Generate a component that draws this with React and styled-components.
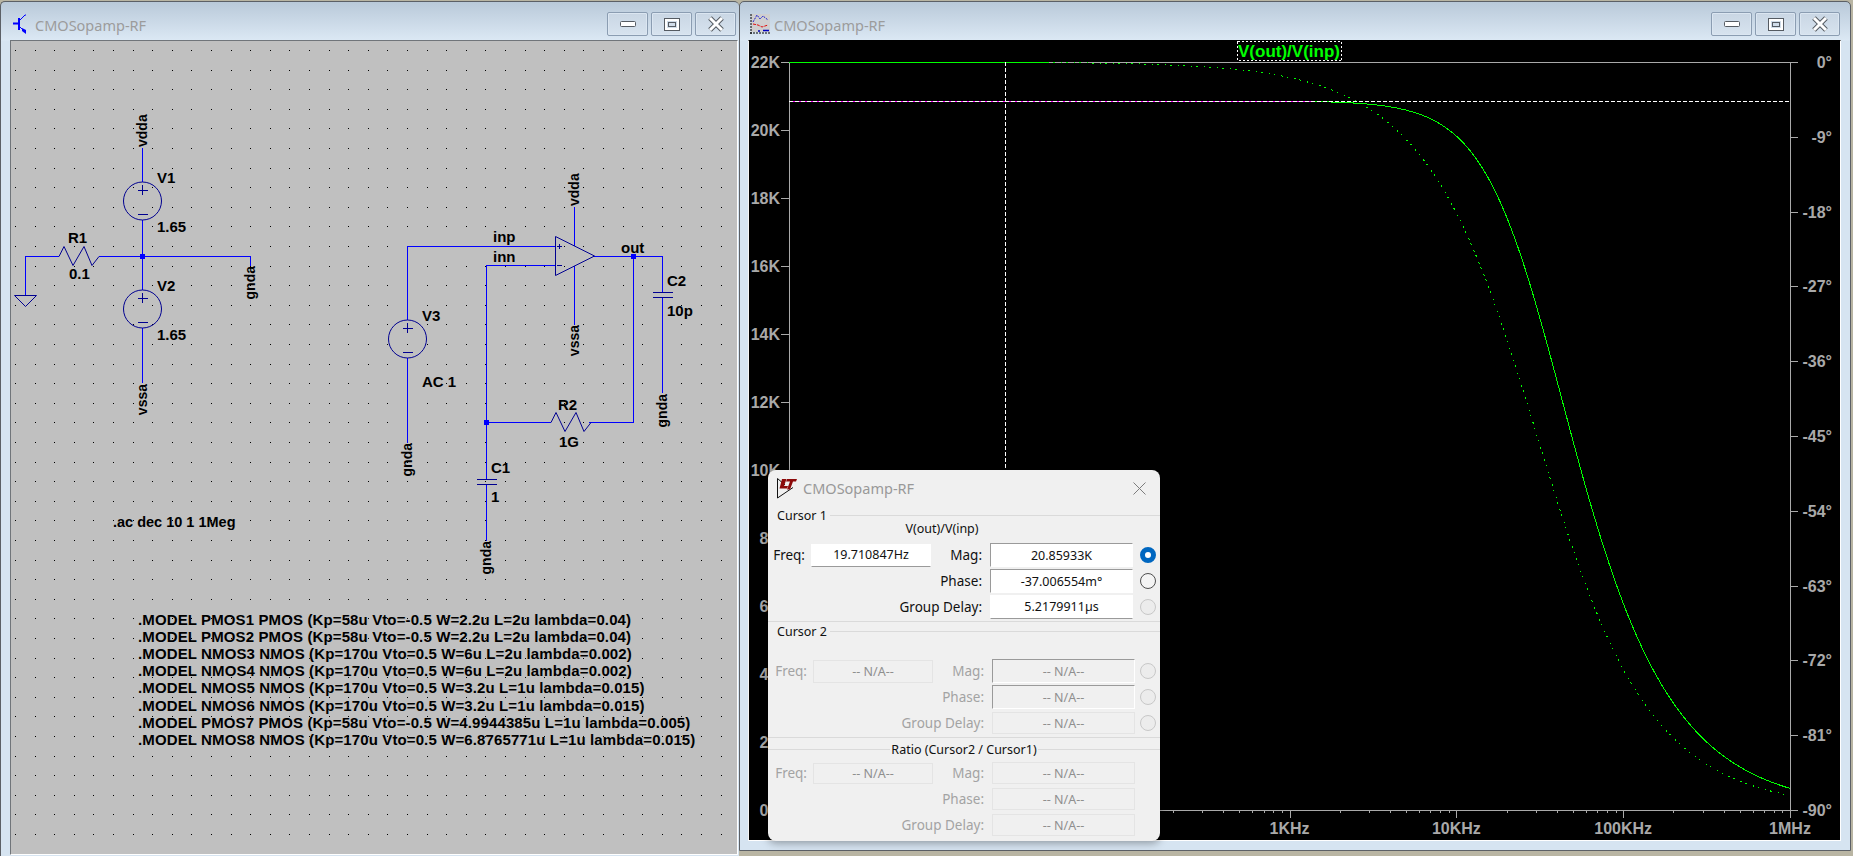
import React from "react";
import styled, { createGlobalStyle } from "styled-components";

const GlobalStyle = createGlobalStyle`
  html, body {
    margin: 0;
    overflow: hidden;
    background: #b9b5a3;
  }
`;

const UI_FONT = `"Noto Sans", "Open Sans", sans-serif`;
const SCH_FONT = `"Liberation Sans", Arial, sans-serif`;

const Desktop = styled.div`
  position: relative;
  width: 1853px;
  height: 856px;
  overflow: hidden;
  background: #b9b5a3;
  font-family: ${UI_FONT};
`;

const WindowFrame = styled.div`
  position: absolute;
  left: ${(p) => p.$left}px;
  top: 1px;
  width: ${(p) => p.$width}px;
  height: ${(p) => p.$height}px;
  box-sizing: border-box;
  display: flex;
  flex-direction: column;
  border: 1px solid #5c6066;
  border-right-width: ${(p) => (p.$noRight ? 0 : 1)}px;
  border-radius: 5px 5px 0 0;
  background: linear-gradient(#b9c9d9 0, #dbe8f4 38px, #d6e4f1 39px, #d6e4f1 100%);
`;

const TitleBar = styled.div`
  flex: 0 0 38px;
  box-sizing: border-box;
  display: flex;
  align-items: flex-start;
  padding: 10px ${(p) => p.$padRight}px 0 ${(p) => p.$padLeft}px;
`;

const TitleIcon = styled.svg`
  flex: none;
  margin-top: 2px;
`;

const TitleText = styled.span`
  margin-left: ${(p) => p.$gap}px;
  flex: 1;
  font-size: 14.5px;
  line-height: 26px;
  color: #9c9c9c;
`;

const WinButtons = styled.div`
  display: flex;
  gap: 3px;
`;

const WinButton = styled.div`
  width: 41px;
  height: 24px;
  box-sizing: border-box;
  display: flex;
  align-items: center;
  justify-content: center;
  border: 1px solid #8b9db2;
  border-radius: 2px;
  background: linear-gradient(#c9d6e4, #d7e3ef);
  box-shadow: inset 0 0 0 1px #dbe6f1;
`;

const SchematicCanvas = styled.div`
  margin-left: 9px;
  width: 728px;
  height: 815px;
  box-sizing: border-box;
  background: #c0c0c0;
  border: 1px solid #fff;
  border-top-color: #70757a;
  border-left-color: #70757a;
`;

const PlotView = styled.div`
  margin-left: 8px;
  width: 1093px;
  height: 801px;
  box-sizing: border-box;
  background: #000;
  border: 1px solid #fff;
  border-top-color: #000;
  border-left-color: #f4f4f4;
`;

const Drawing = styled.svg`
  display: block;
`;

const SchText = styled.text`
  font-family: ${SCH_FONT};
  font-weight: 700;
  font-size: 15px;
  fill: #000;
`;

const NetText = styled(SchText)`
  font-size: 14px;
`;

const AnalysisText = styled(SchText)`
  font-size: 14.5px;
`;

const ModelText = styled(SchText)`
  letter-spacing: 0.12px;
`;

const AxisText = styled.text`
  font-family: ${SCH_FONT};
  font-weight: 700;
  font-size: 16px;
  fill: #a9a9a9;
`;

const TraceTitle = styled(AxisText)`
  font-size: 17px;
  fill: #00ff00;
`;

/* cursor dialog */

const Dialog = styled.div`
  position: absolute;
  left: 768px;
  top: 470px;
  width: 392px;
  height: 371px;
  display: flex;
  flex-direction: column;
  background: #f0f0f0;
  border-radius: 8px;
  box-shadow: 0 2px 8px rgba(0, 0, 0, 0.35);
  font-size: 12.5px;
  color: #111;
`;

const DialogTitle = styled.div`
  flex: 0 0 36px;
  display: flex;
  align-items: center;
  padding: 0 14px 0 8px;
  font-size: 14.5px;
  color: #999;
`;

const DialogTitleText = styled.span`
  flex: 1;
  margin-left: 5px;
`;

const GroupHead = styled.div`
  flex: 0 0 19px;
  display: flex;
  align-items: center;
  padding-left: 9px;
  gap: 3px;
`;

const Rule = styled.div`
  flex: 1;
  height: 1px;
  background: #dadada;
`;

const Separator = styled.div`
  flex: 0 0 1px;
  margin-top: 2px;
  background: #dadada;
`;

const CurveName = styled.div`
  width: 348px;
  height: 12px;
  margin: -2px 0 8px;
  line-height: 12px;
  text-align: center;
`;

const RatioHead = styled.div`
  flex: 0 0 22px;
  display: flex;
  align-items: center;
  gap: 1px;
`;

const Rows = styled.div`
  display: grid;
  grid-auto-rows: ${(p) => p.$rowHeight}px;
  row-gap: ${(p) => p.$rowGap}px;
  margin-top: ${(p) => p.$top}px;
`;

const Row = styled.div`
  display: grid;
  grid-template-columns: 43px 120px 59px 143px 23px;
  align-items: center;
  padding-left: ${(p) => (p.$off ? 2 : 0)}px;
`;

const FieldLabel = styled.span`
  grid-column: ${(p) => (p.$wide ? "1 / 4" : "auto")};
  font-size: 13.5px;
  line-height: 18px;
  text-align: right;
  white-space: nowrap;
  padding-right: ${(p) => p.$pad}px;
  color: ${(p) => (p.$off ? "#a3a3a3" : "#111")};
`;

const Field = styled.div`
  height: ${(p) => p.$height}px;
  box-sizing: border-box;
  display: flex;
  align-items: center;
  justify-content: center;
  white-space: nowrap;
  color: ${(p) => (p.$off ? "#8f8f8f" : "#111")};
  background: ${(p) => (p.$off ? "#f0f0f0" : "#fff")};
  border: 1px solid ${(p) => (p.$off ? "#e4e4e4" : "#fff")};
  ${(p) =>
    p.$sunken
      ? "border-top-color: #9a9a9a; border-left-color: #9a9a9a; border-bottom-color: #fff; border-right-color: #fff;"
      : ""}
  ${(p) => (p.$raised ? "border-bottom-color: #9a9a9a; padding-bottom: 2px;" : "")}
`;

const Radio = styled.div`
  justify-self: end;
  width: 16px;
  height: 16px;
  box-sizing: border-box;
  border-radius: 50%;
  margin-right: ${(p) => (p.$shift ? 2 : 0)}px;
  border: ${(p) =>
    p.$on ? "5px solid #0067c0" : p.$off ? "1px solid #c8c8c8" : "1px solid #4f4f4f"};
  background: ${(p) => (p.$on ? "#fff" : p.$off ? "#ececec" : "#f4f4f4")};
`;

/* chart maths */

const PLOT_LEFT = 789;
const PLOT_RIGHT = 1790;
const PLOT_TOP = 62;
const PLOT_BOTTOM = 810;
const DECADE = (PLOT_RIGHT - PLOT_LEFT) / 6;
const POLE = 30500;

const freqAt = (x) => Math.pow(10, (x - PLOT_LEFT) / DECADE);
const magY = (x) =>
  PLOT_TOP + (22000 - 20859 / Math.sqrt(1 + Math.pow(freqAt(x) / POLE, 2))) * 0.034;
const phaseY = (x) =>
  PLOT_TOP + ((Math.atan(freqAt(x) / POLE) * 180) / Math.PI) * (74.8 / 9);

const curve = (fn, from) => {
  let d = "";
  for (let x = from; x <= PLOT_RIGHT; x += 1) {
    d += `${d ? "L" : "M"}${x} ${fn(x).toFixed(2)}`;
  }
  return d;
};

const leftLabels = ["22K", "20K", "18K", "16K", "14K", "12K", "10K", "8K", "6K", "4K", "2K", "0K"];
const rightLabels = ["0°", "-9°", "-18°", "-27°", "-36°", "-45°", "-54°", "-63°", "-72°", "-81°", "-90°"];
const bottomLabels = ["1Hz", "10Hz", "100Hz", "1KHz", "10KHz", "100KHz", "1MHz"];

const minorTicks = [];
for (let d = 0; d < 6; d += 1) {
  for (let m = 2; m < 10; m += 1) {
    minorTicks.push(Math.round(PLOT_LEFT + (d + Math.log10(m)) * DECADE));
  }
}

const PlotChart = () => (
  <Drawing width="1091" height="799" viewBox="749 41 1091 799">
    <g stroke="#a9a9a9" strokeWidth="1" shapeRendering="crispEdges">
      <path d={`M${PLOT_LEFT}.5 ${PLOT_TOP}V${PLOT_BOTTOM}.5H${PLOT_RIGHT}.5V${PLOT_TOP}`} fill="none" />
      <path d={`M781 ${PLOT_TOP}.5H1798`} />
      {leftLabels.map((_, i) => (
        <path key={i} d={`M781 ${PLOT_TOP + i * 68}.5H${PLOT_LEFT}`} />
      ))}
      {rightLabels.map((_, i) => (
        <path key={i} d={`M${PLOT_RIGHT} ${Math.round(PLOT_TOP + i * 74.8)}.5H1798`} />
      ))}
      {bottomLabels.map((_, i) => (
        <path key={i} d={`M${Math.round(PLOT_LEFT + i * DECADE)}.5 ${PLOT_BOTTOM}v8`} />
      ))}
      {minorTicks.map((x) => (
        <path key={x} d={`M${x}.5 ${PLOT_BOTTOM}v3`} />
      ))}
    </g>

    {leftLabels.map((t, i) => (
      <AxisText key={t} x="780" y={PLOT_TOP + i * 68 + 6} textAnchor="end">
        {t}
      </AxisText>
    ))}
    {rightLabels.map((t, i) => (
      <AxisText key={t} x="1832" y={PLOT_TOP + i * 74.8 + 6} textAnchor="end">
        {t}
      </AxisText>
    ))}
    {bottomLabels.map((t, i) => (
      <AxisText key={t} x={PLOT_LEFT + i * DECADE} y="834" textAnchor="middle">
        {t}
      </AxisText>
    ))}

    <rect x="1237.5" y="41.5" width="104" height="19" fill="none" stroke="#fff" strokeDasharray="2 2" shapeRendering="crispEdges" />
    <TraceTitle x="1289" y="57" textAnchor="middle">
      V(out)/V(inp)
    </TraceTitle>

    <path d={`M${PLOT_LEFT} 62.5H1048`} stroke="#00ff00" shapeRendering="crispEdges" />
    <path d={curve(phaseY, 1048)} fill="none" stroke="#00ff00" strokeDasharray="1.5 4 1.5 6" shapeRendering="crispEdges" />
    <path d={curve(magY, 1313)} fill="none" stroke="#00ff00" shapeRendering="crispEdges" />

    <path d={`M${PLOT_LEFT} 101.5H1313`} stroke="#ff00ff" shapeRendering="crispEdges" />
    <path d={`M${PLOT_LEFT} 101.5H${PLOT_RIGHT}`} stroke="#fff" strokeDasharray="4 2" shapeRendering="crispEdges" />
    <path d="M1005.5 62V480" stroke="#fff" strokeDasharray="4 2" shapeRendering="crispEdges" />
  </Drawing>
);

/* schematic */

const dots = [];
for (let i = 0; i <= 36; i += 1) {
  for (let j = 0; j <= 40; j += 1) {
    dots.push(`M${Math.round(15 + i * 19.6)} ${Math.round(50 + j * 19.6)}h1v1h-1z`);
  }
}

const WIRE = "#0000ff";
const SYMBOL = "#000090";

const Source = ({ x, y }) => (
  <g fill="none" stroke={SYMBOL}>
    <circle cx={x} cy={y} r="19" />
    <path d={`M${x - 5} ${y - 11}h10M${x} ${y - 16}v10M${x - 5} ${y + 13}h10`} shapeRendering="crispEdges" />
  </g>
);

const Resistor = ({ x, y }) => (
  <path
    d={`M${x} ${y}l5 -10l9 19l11 -19l8 19l7 -9`}
    fill="none"
    stroke={SYMBOL}
  />
);

const Capacitor = ({ x, y }) => (
  <path
    d={`M${x - 10} ${y}h20M${x - 10} ${y + 5}h20`}
    stroke={SYMBOL}
    shapeRendering="crispEdges"
  />
);

const Junction = ({ x, y }) => <rect x={x - 2} y={y - 2} width="5" height="5" fill={WIRE} />;

// net labels are rotated, reading upward from the wire end
const NetLabel = ({ x, y, name, below }) => (
  <NetText
    transform={`translate(${x + 4.5} ${y}) rotate(-90)`}
    textAnchor={below ? "end" : "start"}
  >
    {name}
  </NetText>
);

const models = [
  ".MODEL PMOS1 PMOS (Kp=58u Vto=-0.5 W=2.2u L=2u lambda=0.04)",
  ".MODEL PMOS2 PMOS (Kp=58u Vto=-0.5 W=2.2u L=2u lambda=0.04)",
  ".MODEL NMOS3 NMOS (Kp=170u Vto=0.5 W=6u L=2u lambda=0.002)",
  ".MODEL NMOS4 NMOS (Kp=170u Vto=0.5 W=6u L=2u lambda=0.002)",
  ".MODEL NMOS5 NMOS (Kp=170u Vto=0.5 W=3.2u L=1u lambda=0.015)",
  ".MODEL NMOS6 NMOS (Kp=170u Vto=0.5 W=3.2u L=1u lambda=0.015)",
  ".MODEL PMOS7 PMOS (Kp=58u Vto=-0.5 W=4.9944385u L=1u lambda=0.005)",
  ".MODEL NMOS8 NMOS (Kp=170u Vto=0.5 W=6.8765771u L=1u lambda=0.015)",
];

const labels = [
  ["R1", 68, 243],
  ["0.1", 69, 279],
  ["V1", 157, 183],
  ["1.65", 157, 232],
  ["V2", 157, 291],
  ["1.65", 157, 340],
  ["V3", 422, 321],
  ["AC 1", 422, 387],
  ["inp", 493, 242],
  ["inn", 493, 262],
  ["out", 621, 253],
  ["C2", 667, 286],
  ["10p", 667, 316],
  ["R2", 558, 410],
  ["1G", 559, 447],
  ["C1", 491, 473],
  ["1", 491, 502],
];

const Schematic = () => (
  <Drawing width="726" height="813" viewBox="11 41 726 813">
    <path d={dots.join("")} fill="#000" shapeRendering="crispEdges" />

    <g fill="none" stroke={WIRE} shapeRendering="crispEdges">
      <path d="M142.5 148V182M142.5 220V290M142.5 328V383" />
      <path d="M25.5 295V256.5H59M99 256.5H250.5V266" />
      <path d="M407.5 320V246.5H555M407.5 358V443" />
      <path d="M555 265.5H486.5V479M486.5 484V541" />
      <path d="M486.5 422.5H551M589 422.5H633.5V256" />
      <path d="M574.5 207V246M574.5 266V325" />
      <path d="M594 256.5H662.5V292M662.5 297V393" />
    </g>

    <Source x={142.5} y={201} />
    <Source x={142.5} y={309} />
    <Source x={407.5} y={339} />
    <Resistor x={59} y={256.5} />
    <Resistor x={551} y={422.5} />
    <Capacitor x={486.5} y={479} />
    <Capacitor x={662.5} y={292} />

    <path d="M14.5 295.5H36.5L25.5 306.5Z" fill="none" stroke={SYMBOL} />
    <path d="M555.5 236.5V275.5L594.5 256Z" fill="none" stroke={SYMBOL} />
    <path d="M557 246.5h5M559.5 244v5M557 265.5h5" stroke={SYMBOL} shapeRendering="crispEdges" />

    <Junction x={142} y={256} />
    <Junction x={633} y={256} />
    <Junction x={486} y={422} />

    {labels.map(([t, x, y]) => (
      <SchText key={`${t}${y}`} x={x} y={y}>
        {t}
      </SchText>
    ))}

    <NetLabel x={142.5} y={147} name="vdda" />
    <NetLabel x={142.5} y={384} name="vssa" below />
    <NetLabel x={250.5} y={266} name="gnda" below />
    <NetLabel x={574.5} y={206} name="vdda" />
    <NetLabel x={574.5} y={325} name="vssa" below />
    <NetLabel x={407.5} y={443} name="gnda" below />
    <NetLabel x={662.5} y={394} name="gnda" below />
    <NetLabel x={486.5} y={541} name="gnda" below />

    <AnalysisText x="113" y="527">
      .ac dec 10 1 1Meg
    </AnalysisText>
    {models.map((m, i) => (
      <ModelText key={m} x="138" y={625 + i * 17.1}>
        {m}
      </ModelText>
    ))}
  </Drawing>
);

/* small icons */

const MinimizeGlyph = () => (
  <svg width="18" height="8" viewBox="0 0 18 8">
    <rect x="1.5" y="1.5" width="15" height="5" rx="1" fill="#fff" stroke="#555b62" />
  </svg>
);

const MaximizeGlyph = () => (
  <svg width="18" height="15" viewBox="0 0 18 15">
    <rect x="1.5" y="1.5" width="15" height="12" fill="none" stroke="#555b62" />
    <rect x="3" y="3" width="12" height="9" fill="none" stroke="#fff" strokeWidth="2" />
    <rect x="5.5" y="5.5" width="7" height="4" fill="none" stroke="#555b62" />
  </svg>
);

const CloseGlyph = () => (
  <svg width="18" height="16" viewBox="0 0 18 16">
    <path d="M3 2L15 14M15 2L3 14" stroke="#555b62" strokeWidth="5" />
    <path d="M3 2L15 14M15 2L3 14" stroke="#fff" strokeWidth="3" />
  </svg>
);

const TransistorIcon = () => (
  <TitleIcon width="15" height="21" viewBox="0 0 15 21">
    <path d="M0 9.5H5M6 4V16" stroke="#0000ff" strokeWidth="2" fill="none" />
    <path d="M7 6L12 1H13M7 13L12 18" stroke="#0000ff" fill="none" />
    <path d="M9 14L13 16V20L9 17Z" fill="#0000ff" />
  </TitleIcon>
);

const PlotIcon = () => (
  <TitleIcon width="20" height="20" viewBox="0 0 20 20">
    <rect x="1" y="0" width="19" height="18" fill="#cfcfcf" />
    <path d="M1 0V20M0 19H20" stroke="#000" strokeDasharray="2 1" />
    <path d="M3 8L7 1L10 5L13 2L18 6" fill="none" stroke="#2020d0" strokeDasharray="2 1" />
    <path d="M3 10L8 11L12 13L18 11" fill="none" stroke="#e01010" strokeDasharray="3 1" />
    <path d="M8 17H10M13 16.5H19" stroke="#0000c0" strokeWidth="1.5" />
  </TitleIcon>
);

const LtIcon = () => (
  <svg width="22" height="22" viewBox="0 0 22 22">
    <path d="M1.5 1.5V21L17 10.5M1.5 1.5L9 8" fill="none" stroke="#111" />
    <path d="M6 2H10.5L8 9H12L11 11.5H3.5Z" fill="#8c0a0a" />
    <path d="M11 2H21L20 4.5H17L14 12.5H11L14 4.5H10Z" fill="#8c0a0a" />
  </svg>
);

const CloseIcon = () => (
  <svg width="13" height="13" viewBox="0 0 13 13">
    <path d="M.5 .5L12.5 12.5M12.5 .5L.5 12.5" stroke="#7d7d7d" />
  </svg>
);

const WindowButtons = () => (
  <WinButtons>
    <WinButton>
      <MinimizeGlyph />
    </WinButton>
    <WinButton>
      <MaximizeGlyph />
    </WinButton>
    <WinButton>
      <CloseGlyph />
    </WinButton>
  </WinButtons>
);

const CursorRow = ({ freq, label, value, off, radio, on, radioOff, sunken, raised, height = 24 }) => (
  <Row $off={off}>
    {freq && (
      <FieldLabel $pad={6} $off={off}>
        Freq:
      </FieldLabel>
    )}
    {freq && (
      <Field $height={height - 1} $off={off} $raised={!off}>
        {freq}
      </Field>
    )}
    <FieldLabel $pad={8} $off={off} $wide={!freq}>
      {label}:
    </FieldLabel>
    <Field $height={height} $off={off} $sunken={sunken} $raised={raised}>
      {value}
    </Field>
    {radio && <Radio $on={on} $off={radioOff} $shift={off} />}
  </Row>
);

const NA = "-- N/A--";

export default function App() {
  return (
    <Desktop>
      <GlobalStyle />

      <WindowFrame $left={0} $width={739} $height={870} $noRight>
        <TitleBar $padLeft={12} $padRight={3}>
          <TransistorIcon />
          <TitleText $gap={7}>CMOSopamp-RF</TitleText>
          <WindowButtons />
        </TitleBar>
        <SchematicCanvas>
          <Schematic />
        </SchematicCanvas>
      </WindowFrame>

      <WindowFrame $left={739} $width={1112} $height={850}>
        <TitleBar $padLeft={10} $padRight={10}>
          <PlotIcon />
          <TitleText $gap={4}>CMOSopamp-RF</TitleText>
          <WindowButtons />
        </TitleBar>
        <PlotView>
          <PlotChart />
        </PlotView>
      </WindowFrame>

      <Dialog>
        <DialogTitle>
          <LtIcon />
          <DialogTitleText>CMOSopamp-RF</DialogTitleText>
          <CloseIcon />
        </DialogTitle>

        <GroupHead>
          Cursor 1
          <Rule />
        </GroupHead>
        <CurveName>V(out)/V(inp)</CurveName>
        <Rows $rowHeight={24} $rowGap={2} $top={0}>
          <CursorRow freq="19.710847Hz" label="Mag" value="20.85933K" radio on sunken />
          <CursorRow label="Phase" value="-37.006554m°" radio sunken />
          <CursorRow label="Group Delay" value="5.2179911µs" radio radioOff raised />
        </Rows>
        <Separator />

        <GroupHead>
          Cursor 2
          <Rule />
        </GroupHead>
        <Rows $rowHeight={24} $rowGap={2} $top={18}>
          <CursorRow freq={NA} label="Mag" value={NA} radio radioOff off sunken />
          <CursorRow label="Phase" value={NA} radio radioOff off sunken />
          <CursorRow label="Group Delay" value={NA} radio radioOff off height={22} />
        </Rows>
        <Separator />

        <RatioHead>
          <Rule />
          Ratio (Cursor2 / Cursor1)
          <Rule />
        </RatioHead>
        <Rows $rowHeight={22} $rowGap={4} $top={2}>
          <CursorRow freq={NA} label="Mag" value={NA} off height={22} />
          <CursorRow label="Phase" value={NA} off height={22} />
          <CursorRow label="Group Delay" value={NA} off height={22} />
        </Rows>
      </Dialog>
    </Desktop>
  );
}
